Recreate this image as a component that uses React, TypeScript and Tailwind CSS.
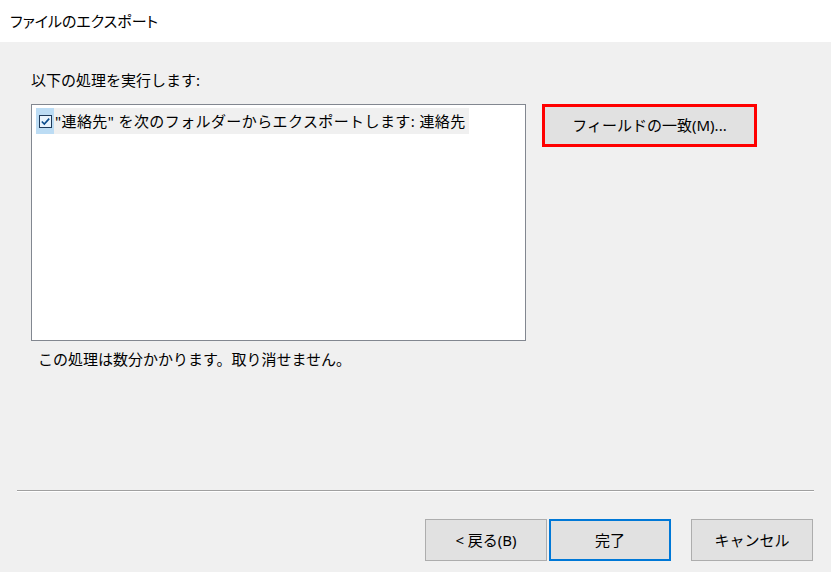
import React from "react"

const font = "font-['Noto_Sans','Noto_Sans_CJK_JP',sans-serif]"

function DialogButton({ label, primary }: { label: string; primary?: boolean }) {
  return (
    <button
      className={
        "h-[42px] w-[122px] bg-[#e1e1e1] text-[15px] text-black " +
        (primary ? "border-2 border-[#0078d7]" : "border border-[#adadad]")
      }
    >
      {label}
    </button>
  )
}

export default function App() {
  return (
    <div className={`flex h-[572px] w-[831px] flex-col bg-[#f0f0f0] text-black ${font}`}>
      <div className="flex h-[42px] items-center bg-white pl-[10px] text-[15px] [font-feature-settings:'palt']">
        ファイルのエクスポート
      </div>

      <div className="flex flex-1 flex-col px-[31px] pt-[27px]">
        <div className="text-[15px] leading-[22px]">以下の処理を実行します:</div>
        <div className="mt-[13px] flex gap-[16px]">
          <div className="h-[237px] w-[495px] border border-[#828790] bg-white px-[4px] pt-[3px]">
            <div className="flex h-[26px] items-center">
              <div className="flex h-[26px] w-[18px] items-center justify-center bg-[#bcdcf4]">
                <svg width="13" height="13" viewBox="0 0 13 13">
                  <rect x="0.5" y="0.5" width="12" height="12" fill="#e8f3fc" stroke="#1e3a5a" />
                  <path d="M2.8 6.5 L5.3 9 L10.2 3.6" fill="none" stroke="#0a4c8c" strokeWidth="1.6" />
                </svg>
              </div>
              <div className="flex h-[26px] items-center bg-[#f0f0f0] pl-[1px] pr-[3px] text-[15px] tracking-[0.4px]">
                "連絡先" を次のフォルダーからエクスポートします: 連絡先
              </div>
            </div>
          </div>
          <button className="h-[43px] w-[215px] border-[3px] border-[#ff0000] bg-[#e1e1e1] text-[15px]">
            フィールドの一致(M)...
          </button>
        </div>
        <div className="mt-[7px] pl-[7px] text-[15px] leading-[22px]">この処理は数分かかります。取り消せません。</div>
      </div>

      <div className="mx-[17px] border-t border-b border-t-[#a0a0a0] border-b-white" />

      <div className="flex justify-end gap-[2px] pb-[11px] pr-[18px] pt-[27px]">
        <DialogButton label={"<\u00a0戻る(B)"} />
        <DialogButton label="完了" primary />
        <div className="w-[16px]" />
        <DialogButton label="キャンセル" />
      </div>
    </div>
  )
}
